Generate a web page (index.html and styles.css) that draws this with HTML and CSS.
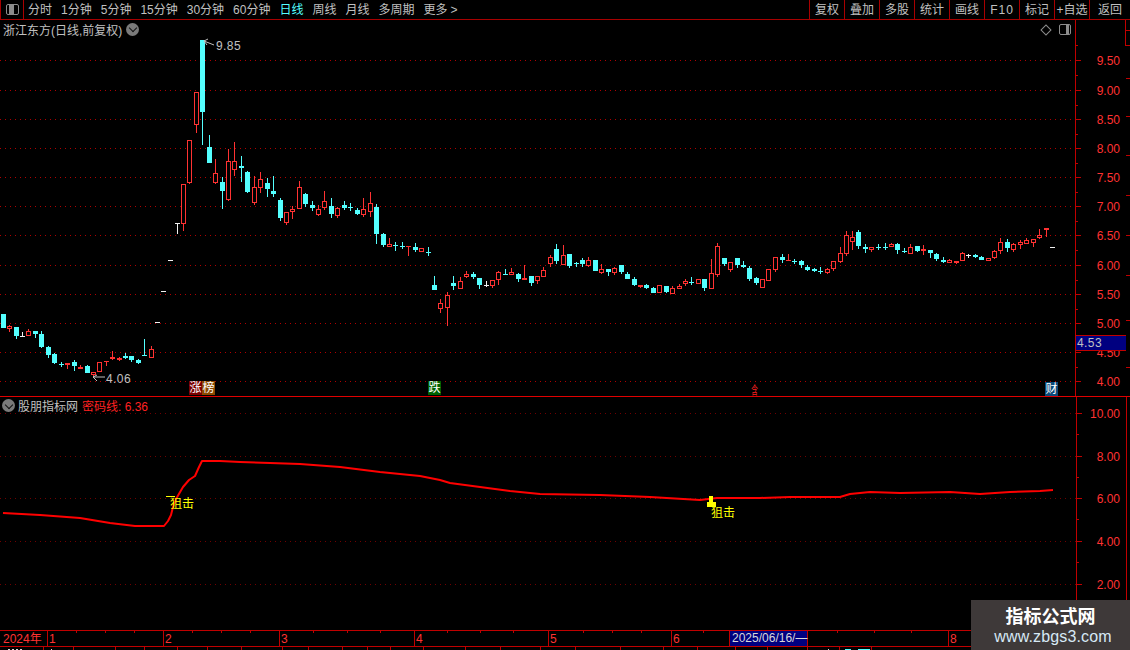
FILE: index.html
```html
<!DOCTYPE html>
<html lang="zh">
<head>
<meta charset="utf-8">
<title>浙江东方 日线</title>
<link rel="stylesheet" href="styles.css">
</head>
<body>
<div class="app">
  <header class="toolbar">
    <div class="side-toggle"><span class="toggle-icon toggle-left"></span></div>
    <nav class="periods">
      <span>分时</span><span>1分钟</span><span>5分钟</span><span>15分钟</span><span>30分钟</span><span>60分钟</span>
      <span class="active">日线</span><span>周线</span><span>月线</span><span>多周期</span><span>更多</span><span class="more">&gt;</span>
    </nav>
    <nav class="actions">
      <span>复权</span><span>叠加</span><span>多股</span><span>统计</span><span>画线</span><span class="wide">F10</span><span>标记</span><span>+自选</span><span class="last">返回</span>
    </nav>
  </header>

  <section class="pane pane-main">
    <svg id="price" class="chart" viewBox="0 20 1130 376"></svg>
    <div class="pane-title">
      <span>浙江东方(日线,前复权)</span>
      <span class="chevron"></span>
    </div>
    <div class="pane-tools">
      <span class="diamond"></span>
      <span class="toggle-icon toggle-right"></span>
    </div>
    <div class="tag-row">
      <span class="tag tag-a">涨</span><span class="tag tag-b">榜</span>
    </div>
    <span class="tag tag-c">跌</span>
    <span class="tag tag-d">含</span>
    <span class="tag tag-e">财</span>
    <div class="last-price">4.53</div>
  </section>

  <section class="pane pane-ind">
    <svg id="indicator" class="chart" viewBox="0 397 1130 233"></svg>
    <div class="pane-title ind-title">
      <span class="chevron"></span>
      <span>股朋指标网</span>
      <span class="ind-value">密码线: 6.36</span>
    </div>
  </section>

  <footer class="timeaxis">
    <svg id="time" class="chart" viewBox="0 631 1130 15"></svg>
    <div class="date-box">2025/06/16/—</div>
  </footer>

  <div class="bottom-strip">
    <svg id="strip" class="chart" viewBox="0 647 1130 3"></svg>
  </div>

  <aside class="watermark">
    <div class="wm-title">指标公式网</div>
    <div class="wm-url">www.zbgs3.com</div>
  </aside>
</div>
<script src="chart.js"></script>
</body>
</html>
```
FILE: styles.css
```css
* { box-sizing: border-box; }
html, body { margin: 0; padding: 0; background: #000; }
body {
  font-family: "Liberation Sans", "Noto Sans CJK SC", sans-serif;
  font-size: 12px;
  color: #c0c0c0;
}
.app {
  position: relative;
  width: 1130px;
  height: 650px;
  overflow: hidden;
  display: flex;
  flex-direction: column;
  background: #000;
}

/* toolbar */
.toolbar {
  flex: 0 0 20px;
  min-height: 0;
  display: flex;
  align-items: flex-start;
  border-bottom: 1px solid #a80000;
  line-height: 21px;
}
.side-toggle {
  width: 24px;
  height: 19px;
  display: flex;
  align-items: center;
  justify-content: center;
  border-left: 1px solid #a80000;
  border-right: 1px solid #a80000;
}
.toggle-icon {
  display: block;
  width: 12px;
  height: 11px;
  border: 1px solid #8c8c8c;
  border-radius: 2px;
  background: #000;
}
.toggle-left { width: 13px; background: linear-gradient(90deg, #000 2px, #8c8c8c 2px, #8c8c8c 7px, #000 7px); }
.toggle-right { background: linear-gradient(90deg, #000 6px, #8c8c8c 6px, #8c8c8c 9px, #000 9px); }
.periods {
  display: flex;
  gap: 9px;
  height: 19px;
  padding-left: 4px;
}
.periods .active { color: #54ffff; }
.periods .more { margin-left: -6px; }
.actions {
  margin-left: auto;
  display: flex;
  height: 19px;
}
.actions span {
  width: 35px;
  height: 19px;
  text-align: center;
  border-left: 1px solid #a80000;
  white-space: nowrap;
}
.actions .wide { letter-spacing: 1px; }
.actions .last { width: 41px; }

/* panes */
.pane { position: relative; }
.pane-main {
  flex: 0 0 377px;
  border-bottom: 1px solid #e00000;
}
.pane-ind { flex: 0 0 233px; }
.chart {
  display: block;
  width: 1130px;
  height: 100%;
  shape-rendering: crispEdges;
}
.pane-title {
  position: absolute;
  left: 3px;
  top: 0;
  display: flex;
  align-items: center;
  gap: 4px;
  height: 18px;
  white-space: nowrap;
}
.chevron {
  display: block;
  position: relative;
  width: 13px;
  height: 13px;
  border-radius: 50%;
  background: #7a7a7a;
}
.chevron::after {
  content: "";
  position: absolute;
  left: 3.5px;
  top: 2.5px;
  width: 5px;
  height: 5px;
  border-right: 1.5px solid #111;
  border-bottom: 1.5px solid #111;
  transform: rotate(45deg);
}
.pane-tools {
  position: absolute;
  left: 1042px;
  top: 4px;
  display: flex;
  align-items: center;
  gap: 9px;
}
.diamond {
  display: block;
  width: 8px;
  height: 8px;
  border: 1px solid #8c8c8c;
  transform: rotate(45deg);
}
.ind-title { left: 2px; top: 0; height: 17px; }
.ind-title span:nth-child(2) { margin-left: -1px; }
.ind-value { color: #ff2020; }

.tag {
  display: block;
  width: 13px;
  height: 14px;
  font-size: 12px;
  line-height: 14px;
  text-align: center;
  color: #fff;
}
.tag-row { position: absolute; left: 189px; top: 361px; display: flex; }
.tag-a { background: #7a0000; }
.tag-b { background: #8a4a00; }
.tag-c { position: absolute; left: 428px; top: 361px; background: #006000; }
.tag-d { position: absolute; left: 748px; top: 364px; color: #ff2020; transform: scaleX(.55); }
.tag-e { position: absolute; left: 1045px; top: 362px; background: #0a4a78; }
.last-price {
  position: absolute;
  left: 1076px;
  top: 315px;
  width: 50px;
  height: 16px;
  padding-left: 1px;
  line-height: 14px;
  letter-spacing: .4px;
  background: #000080;
  border-top: 1px solid #c00000;
  border-bottom: 1px solid #c00000;
}

/* time axis */
.timeaxis {
  position: relative;
  flex: 0 0 17px;
  border-top: 1px solid #c00000;
  border-bottom: 1px solid #c00000;
}
.date-box {
  position: absolute;
  left: 729px;
  top: 0;
  width: 79px;
  height: 15px;
  padding-left: 2px;
  line-height: 15px;
  white-space: nowrap;
  color: #d8d8d8;
  background: #000080;
  border-left: 1px solid #c00000;
  border-right: 1px solid #c00000;
}

.bottom-strip { flex: 0 0 3px; }

/* watermark */
.watermark {
  position: absolute;
  right: 0;
  bottom: 0;
  width: 159px;
  height: 50px;
  text-align: center;
  background: #3e3939;
  color: #fff;
}
.wm-title {
  font-family: "Noto Sans CJK SC", sans-serif;
  font-size: 18px;
  font-weight: 700;
  line-height: 24px;
  padding-top: 3px;
}
.wm-url {
  font-size: 16px;
  line-height: 20px;
  letter-spacing: .15px;
  color: #d6e8f5;
  padding-left: 5px;
}

/* svg pieces */
.grid { stroke: #b00000; stroke-width: 1; stroke-dasharray: 1 4; }
.grid-low { stroke: #700000; stroke-width: 1; stroke-dasharray: 1 4; }
.axis { stroke: #c00000; stroke-width: 1; }
.axis-label { fill: #ff3232; font-size: 12px; }
.up { fill: #ff3232; }
.up-box { fill: #000; stroke: #ff3232; stroke-width: 1; }
.down { fill: #54ffff; }
.flat { fill: #f0f0f0; }
.note { fill: #c0c0c0; font-size: 12px; letter-spacing: .4px; }
.note-line { stroke: #c0c0c0; stroke-width: 1; fill: none; shape-rendering: auto; }
.curve { stroke: #ff0000; stroke-width: 2; fill: none; shape-rendering: geometricPrecision; stroke-linejoin: round; }
.signal { fill: #ffff00; font-size: 12px; }
.signal-mark { fill: #ffff00; }
.strip-mark { fill: #d8d8d8; }
.strip-cyan { fill: #54ffff; }
```
FILE: chart.js
```js
// x, wick high, wick low, body top, body bottom, kind (r up, c down, w flat)
var CANDLES = [
[3.5,314,328,314,328,'c'],[9.5,325,332,326,329,'r'],[16.5,327,339,327,336,'c'],[22,332,337,336,337,'w'],
[28.5,329,336,331,336,'r'],[35.5,331,338,331,334,'c'],[41.5,331,348,334,347,'c'],[48.5,346,358,347,355,'c'],
[54.5,353,364,354,363,'c'],[61.5,362,367,364,365,'c'],[67.5,363,369,363,365,'r'],[74,360,371,362,366,'c'],
[80.5,365,369,367,369,'r'],[87,365,373,366,373,'c'],[93,372,377,372,375,'r'],[99,362,372,362,372,'r'],
[106,361,366,361,362,'r'],[112.5,351,360,357,359,'r'],[119.5,357,361,358,360,'r'],[125.5,353,359,356,358,'c'],
[131.5,356,362,356,360,'c'],[138.5,359,364,360,363,'c'],[144,339,355,355,356,'c'],[151.5,346,358,349,358,'r'],
[157,322,323,322,323,'w'],[163,291,292,291,292,'w'],[170,260,261,260,261,'w'],[177,223,234,223,224,'w'],
[183.5,184,231,184,224,'r'],[189.5,140,184,140,183,'r'],[196.5,92,133,92,125,'r'],[202.5,40,145,40,112,'c'],
[209,135,163,147,163,'c'],[215.5,159,184,173,183,'r'],[222,177,209,182,191,'c'],[228,149,201,161,200,'r'],
[234.5,142,176,161,170,'r'],[241,156,182,166,168,'c'],[247.5,171,193,172,192,'c'],[254,176,205,187,203,'r'],
[260.5,172,193,179,188,'r'],[267,178,197,183,189,'c'],[273,176,197,191,194,'c'],[280,198,221,200,218,'c'],
[286,212,225,212,223,'r'],[292.5,206,219,209,212,'r'],[299,181,209,187,209,'r'],[305,193,207,194,204,'c'],
[312,201,211,205,208,'c'],[318,205,216,209,215,'r'],[324.5,191,210,201,208,'r'],[331,198,218,206,214,'c'],
[337.5,207,218,208,216,'r'],[344.5,201,210,205,208,'c'],[350.5,203,211,207,208,'c'],[357,208,215,210,214,'c'],
[363.5,198,217,209,215,'r'],[370,192,217,203,212,'r'],[376.5,204,244,207,234,'c'],[383,233,247,234,245,'c'],
[389,238,247,244,247,'r'],[395.5,242,251,245,246,'c'],[402,242,249,246,247,'c'],[408,246,256,246,247,'r'],
[415,243,252,247,250,'c'],[421,248,252,248,252,'r'],[428.5,247,256,252,253,'c'],
[434.5,276,290,285,290,'c'],[440.5,299,313,303,309,'r'],[447.5,292,326,295,308,'r'],[453.5,276,290,283,286,'c'],
[460.5,277,289,281,289,'r'],[466.5,271,278,274,277,'r'],[473,272,279,274,277,'c'],[479.5,278,289,278,285,'c'],
[486,281,287,285,286,'w'],[492.5,280,288,280,286,'r'],[498.5,271,285,272,280,'r'],[505,269,275,274,275,'c'],
[511.5,268,275,272,275,'r'],[518,273,282,274,279,'c'],[524.5,265,280,278,280,'r'],[531.5,276,286,276,283,'c'],
[537.5,276,284,276,281,'r'],[543.5,267,277,270,277,'r'],[550.5,255,267,257,264,'r'],[556.5,244,264,249,261,'c'],
[563.5,245,265,255,265,'r'],[569.5,254,268,254,266,'c'],[576.5,262,267,263,264,'c'],[582.5,258,267,260,264,'c'],
[588.5,257,267,260,266,'r'],[595.5,260,271,260,271,'c'],[601.5,264,274,269,273,'r'],[608.5,269,276,269,272,'c'],
[614.5,267,275,268,273,'r'],[621.5,265,274,265,272,'c'],[627.5,272,279,274,279,'c'],[634.5,277,286,279,285,'c'],
[640,285,288,285,287,'r'],[646.5,284,289,285,288,'c'],[653,287,293,288,293,'c'],[659,285,293,285,293,'r'],
[666,286,293,286,292,'c'],[672,286,294,288,294,'r'],[679,284,289,286,289,'r'],[685,279,286,281,284,'r'],
[691.5,277,285,282,283,'c'],[698,279,284,279,284,'r'],[704.5,279,291,279,288,'c'],[711.5,259,289,273,289,'r'],
[717,243,277,246,275,'r'],[724.5,258,266,258,264,'c'],[730.5,262,272,262,270,'r'],[737,258,268,258,265,'c'],
[743,261,268,265,267,'c'],[749.5,266,281,268,279,'c'],[756,277,285,278,283,'c'],[762,279,288,279,288,'r'],
[768.5,269,281,269,281,'r'],[775,257,272,257,270,'r'],[782.5,254,263,257,260,'c'],[788,254,261,260,261,'r'],
[794,259,264,261,262,'c'],[801,260,268,261,265,'c'],[807.5,265,271,267,270,'c'],[814,268,272,269,271,'c'],
[820.5,267,274,271,272,'c'],[827,268,274,269,273,'r'],[833.5,261,271,261,269,'r'],[840,247,263,253,262,'r'],
[846,231,256,235,254,'r'],[852.5,231,250,237,242,'r'],[858.5,230,249,232,246,'c'],[865,244,253,247,249,'c'],
[871.5,247,252,247,250,'r'],[878,244,250,247,248,'c'],[885.5,243,250,247,248,'c'],[891.5,243,247,244,247,'r'],[897.5,243,254,244,250,'c'],
[904.5,248,253,251,252,'c'],[910.5,244,254,247,254,'r'],[917.5,246,252,246,251,'c'],[923.5,245,255,249,251,'r'],
[930,250,258,250,253,'c'],[936.5,253,261,254,259,'c'],[943,257,263,260,262,'c'],[949.5,259,263,260,263,'r'],
[956,261,264,261,263,'r'],[962.5,252,261,253,261,'r'],[968,254,258,255,256,'w'],[975,254,258,255,257,'c'],
[981,256,260,257,260,'c'],[988,258,261,258,261,'r'],[994.5,250,259,251,258,'r'],[1000.5,238,254,242,251,'r'],
[1007,239,252,242,248,'c'],[1013.5,243,252,244,250,'r'],[1020,240,249,242,245,'r'],[1026,238,244,240,244,'r'],
[1033,239,247,239,243,'r'],[1039.5,229,239,235,238,'r'],[1046,228,237,228,230,'r'],[1052,247,248,247,248,'w']
];

var CURVE = [[3,513],[40,515],[80,518],[110,523],[135,526],[164,526],[168,521],[171,515],[173,507],[176,499],[183,487],[189,480],[195,476],[199,467],[202,461],[220,461],[240,462],[270,463],[300,464],[340,467],[380,472],[420,476],[440,480],[450,483],[480,487],[510,491],[540,494],[600,495],[650,497],[700,500],[717,498],[760,498],[790,497],[840,497],[850,494],[870,492],[900,493],[950,492],[980,494],[1010,492],[1040,491],[1053,490]];

var NS = 'http://www.w3.org/2000/svg';
function el(parent, name, attrs, text) {
  var n = document.createElementNS(NS, name);
  for (var k in attrs) n.setAttribute(k, attrs[k]);
  if (text !== undefined) n.textContent = text;
  parent.appendChild(n);
  return n;
}
function hline(svg, y, x1, x2, cls) { el(svg, 'line', {x1: x1, x2: x2, y1: y + .5, y2: y + .5, 'class': cls}); }
function vline(svg, x, y1, y2, cls) { el(svg, 'line', {x1: x + .5, x2: x + .5, y1: y1, y2: y2, 'class': cls}); }

// price pane
var price = document.getElementById('price');
var levels = [[60,'9.50'],[90,'9.00'],[119,'8.50'],[148,'8.00'],[177,'7.50'],[206,'7.00'],[235,'6.50'],[265,'6.00'],[294,'5.50'],[323,'5.00'],[352,'4.50'],[381,'4.00']];
levels.forEach(function (l) {
  hline(price, l[0], 0, 1075, 'grid');
  hline(price, l[0], 1075, 1081, 'axis');
  hline(price, l[0] + 15, 1075, 1078, 'axis');
  el(price, 'text', {x: 1120, y: l[0] + 5, 'text-anchor': 'end', 'class': 'axis-label'}, l[1]);
});
hline(price, 45, 1075, 1078, 'axis');
vline(price, 1075, 20, 396, 'axis');
vline(price, 1125, 20, 46, 'axis');
[30,45,78,116,155,195,235,275,320,367].forEach(function (y) { hline(price, y, 1126, 1130, 'axis'); });

CANDLES.forEach(function (c) {
  var left = Math.round(c[0] - 2.5), mid = left + 2;
  var kind = c[5], cls = kind === 'r' ? 'up' : kind === 'c' ? 'down' : 'flat';
  el(price, 'rect', {x: mid, y: c[1], width: 1, height: Math.max(1, c[2] - c[1]), 'class': cls});
  var h = c[4] - c[3];
  if (kind === 'r' && h > 2) {
    el(price, 'rect', {x: left + .5, y: c[3] + .5, width: 4, height: h - 1, 'class': 'up-box'});
  } else {
    el(price, 'rect', {x: left, y: c[3], width: 5, height: Math.max(1, h), 'class': cls});
  }
});

el(price, 'path', {d: 'M204 41 L214 45 M204 41 L208 39 M204 41 L207 45', 'class': 'note-line'});
el(price, 'text', {x: 216, y: 50, 'class': 'note'}, '9.85');
el(price, 'path', {d: 'M93 377 H105 M93 377 L97 375 M93 377 L97 381', 'class': 'note-line'});
el(price, 'text', {x: 106, y: 383, 'class': 'note'}, '4.06');

// indicator pane
var ind = document.getElementById('indicator');
[[413,'10.00'],[456,'8.00'],[498,'6.00'],[541,'4.00'],[584,'2.00']].forEach(function (l) {
  hline(ind, l[0], 0, 1076, 'grid-low');
  hline(ind, l[0], 1076, 1082, 'axis');
  hline(ind, l[0] + 21, 1076, 1079, 'axis');
  el(ind, 'text', {x: 1120, y: l[0] + 5, 'text-anchor': 'end', 'class': 'axis-label'}, l[1]);
});
vline(ind, 1076, 397, 630, 'axis');
vline(ind, 1126, 397, 630, 'axis');
el(ind, 'polyline', {points: CURVE.map(function (p) { return p.join(','); }).join(' '), 'class': 'curve'});
el(ind, 'rect', {x: 166, y: 496, width: 9, height: 1, 'class': 'signal-mark'});
el(ind, 'text', {x: 170, y: 508, 'class': 'signal'}, '狙击');
el(ind, 'rect', {x: 707, y: 502, width: 9, height: 5, 'class': 'signal-mark'});
el(ind, 'rect', {x: 709, y: 496, width: 4, height: 6, 'class': 'signal-mark'});
el(ind, 'text', {x: 711, y: 517, 'class': 'signal'}, '狙击');

// time axis
var time = document.getElementById('time');
[[47,'1',49],[163,'2',165],[279,'3',281],[414,'4',416],[548,'5',550],[671,'6',673],[948,'8',950]].forEach(function (m) {
  vline(time, m[0], 631, 646, 'axis');
  el(time, 'text', {x: m[2], y: 643, 'class': 'axis-label'}, m[1]);
});
el(time, 'text', {x: 3, y: 643, 'class': 'axis-label'}, '2024年');
[76,105,134,192,221,250,313,347,380,447,480,513,583,612,641,703,837,874,911,985,1020,1055,1090].forEach(function (x) {
  vline(time, x, 631, 633, 'axis');
});

// clipped row beneath the time axis
var strip = document.getElementById('strip');
[43,73,115,144,177,207,241,282,308,342,367,390,423,465,500,540,575,620,663,697,735,767,807,839,871].forEach(function (x) {
  vline(strip, x, 647, 650, 'axis');
});
[[8,2],[12,2],[16,2],[20,2],[51,1],[828,1]].forEach(function (m) {
  el(strip, 'rect', {x: m[0], y: 649, width: m[1], height: 1, 'class': 'strip-mark'});
});
el(strip, 'rect', {x: 845, y: 649, width: 6, height: 1, 'class': 'strip-cyan'});
el(strip, 'rect', {x: 858, y: 649, width: 12, height: 1, 'class': 'strip-cyan'});
```
